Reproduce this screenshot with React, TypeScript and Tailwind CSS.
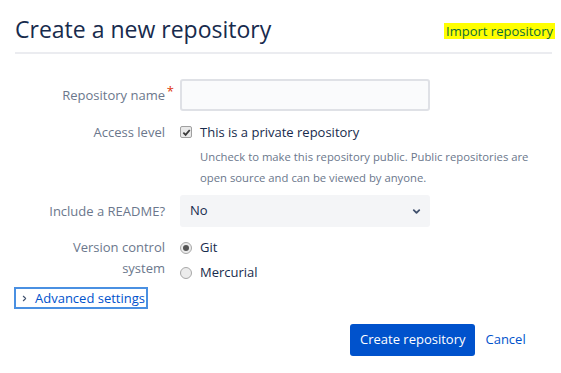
import { ChevronDown, ChevronRight } from 'lucide-react';

const font = { fontFamily: '"Open Sans", "Noto Sans", sans-serif' };

const Label = ({ children }: { children: React.ReactNode }) => (
  <div className="w-[180px] shrink-0 pr-[15px] text-right text-[13px] leading-[20px] text-[#6b778c]">{children}</div>
);

const Check = () => (
  <span className="flex h-[12px] w-[12px] shrink-0 items-center justify-center rounded-[2px] border border-[#a0a0a0] bg-[#e9e9e9]">
    <svg viewBox="0 0 10 10" className="h-[9px] w-[9px]">
      <path d="M1.5 5.2 L4 7.6 L8.6 2.2" fill="none" stroke="#3a3a3a" strokeWidth="2" />
    </svg>
  </span>
);

const Radio = ({ on }: { on?: boolean }) => (
  <span className="flex h-[12px] w-[12px] shrink-0 items-center justify-center rounded-full border border-[#a8a8a8] bg-[#ececec]">
    {on && <span className="h-[6px] w-[6px] rounded-full bg-[#555]" />}
  </span>
);

export default function App() {
  return (
    <div className="min-h-[373px] w-[561px] bg-white text-[#172b4d]" style={font}>
      <div className="ml-[15px] mr-[9px] flex items-end justify-between border-b-2 border-[#ebecf0] pt-[14px] pb-[8px]">
        <h1 className="text-[23px] leading-[30px] font-normal text-[#172b4d]">Create a new repository</h1>
        <a className="mb-[5px] mr-[-3px] bg-[#ffff00] px-[2px] text-[13px] leading-[16px] text-[#0d6b3a]">Import repository</a>
      </div>

      <div className="mt-[25px] flex flex-col">
        <div className="flex items-center">
          <Label>
            <span className="relative">
              Repository name
              <span className="absolute -right-[9px] -top-[5px] text-[#de350b]">*</span>
            </span>
          </Label>
          <input className="h-[32px] w-[250px] rounded-[3px] border-2 border-[#dfe1e6] bg-[#fafbfc] px-2 text-[13px] outline-none" />
        </div>

        <div className="mt-[10px] flex items-start">
          <Label>
            <span className="mt-[1px] block">Access level</span>
          </Label>
          <div className="flex flex-col">
            <label className="flex items-center gap-[8px] text-[13px] leading-[22px]">
              <Check />
              <span>This is a private repository</span>
            </label>
            <p className="mt-[3px] ml-[20px] w-[340px] text-[11.3px] leading-[21px] text-[#6b778c]">
              Uncheck to make this repository public. Public repositories are open source and can be viewed by anyone.
            </p>
          </div>
        </div>

        <div className="mt-[7px] flex items-center">
          <Label>Include a README?</Label>
          <div className="flex h-[32px] w-[250px] items-center justify-between rounded-[3px] bg-[#f4f5f7] pl-[10px] pr-[8px] text-[13px]">
            <span>No</span>
            <ChevronDown size={11} strokeWidth={4} className="text-[#42526e]" />
          </div>
        </div>

        <div className="mt-[10px] flex items-start">
          <Label>
            <span className="block leading-[21px]">Version control</span>
            <span className="block leading-[21px]">system</span>
          </Label>
          <div className="flex flex-col gap-[4px] text-[13px]">
            <label className="flex items-center gap-[8px] leading-[21px]">
              <Radio on />
              <span>Git</span>
            </label>
            <label className="flex items-center gap-[8px] leading-[21px]">
              <Radio />
              <span>Mercurial</span>
            </label>
          </div>
        </div>

        <div className="ml-[14px] mt-[4px] flex w-fit items-center gap-[6px] whitespace-nowrap border-2 border-[#4a90e2] pl-[4px] pr-[1px] text-[13px] leading-[18px] text-[#0052cc]">
          <ChevronRight size={9} strokeWidth={3} className="text-[#42526e]" />
          <span>Advanced settings</span>
        </div>

        <div className="mt-[15px] flex items-center pl-[350px]">
          <button className="h-[32px] rounded-[3px] bg-[#0052cc] px-[10px] text-[13px] text-white">Create repository</button>
          <a className="ml-[10px] text-[13px] text-[#0052cc]">Cancel</a>
        </div>
      </div>
    </div>
  );
}
